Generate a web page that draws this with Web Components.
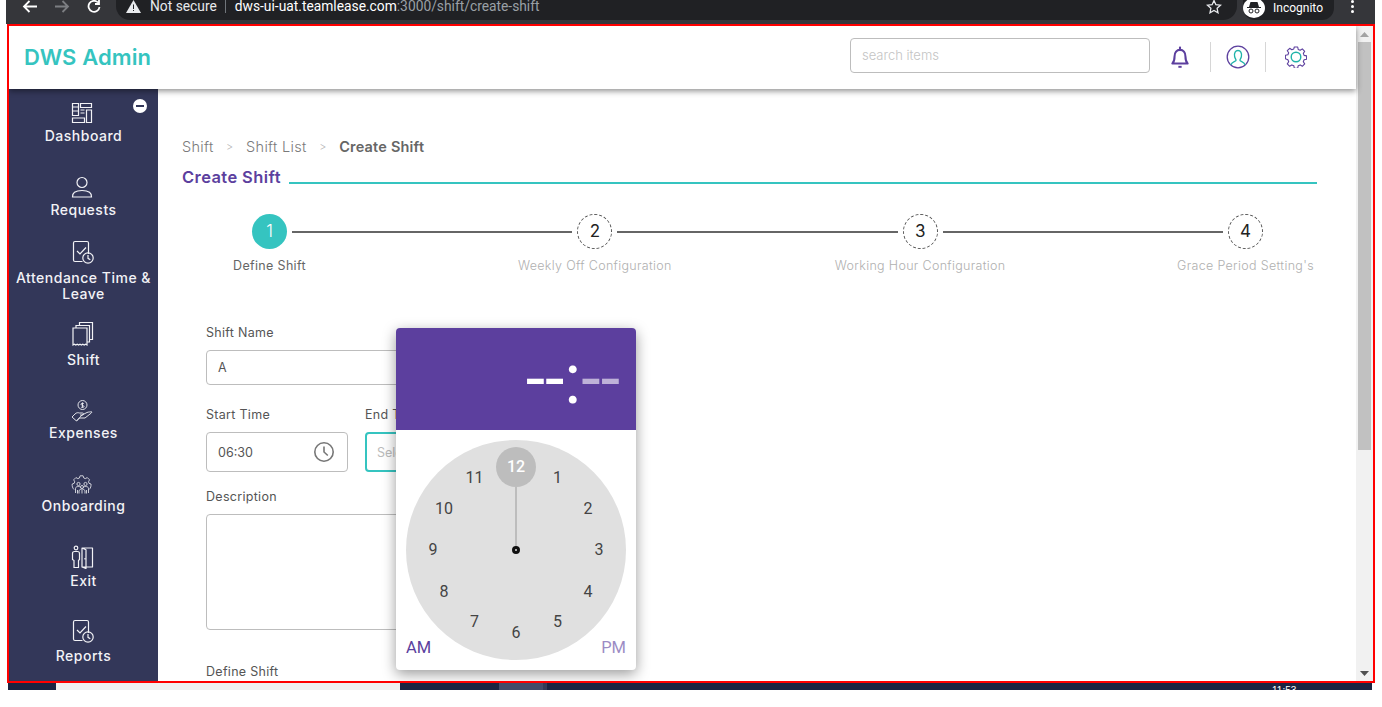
<!DOCTYPE html>
<html>
<head>
<meta charset="utf-8">
<title>Create Shift</title>
<style>
html, body { margin: 0; height: 100%; overflow: hidden; background: #fff; }
body { font-family: Inter, "Liberation Sans", sans-serif; }
</style>
</head>
<body>
<dws-browser-bar></dws-browser-bar>
<dws-frame>
  <dws-header slot="header"></dws-header>
  <dws-nav slot="nav">
    <dws-nav-item label="Dashboard" icon="dashboard" height="55" lift="4"></dws-nav-item>
    <dws-nav-item label="Requests" icon="user" height="74" lift="4"></dws-nav-item>
    <dws-nav-item label="Attendance Time &amp; Leave" icon="check" height="84" lift="6"></dws-nav-item>
    <dws-nav-item label="Shift" icon="pages" height="66" lift="5"></dws-nav-item>
    <dws-nav-item label="Expenses" icon="hand" height="73" lift="3"></dws-nav-item>
    <dws-nav-item label="Onboarding" icon="gear" height="73" lift="3"></dws-nav-item>
    <dws-nav-item label="Exit" icon="exit" height="75" lift="4"></dws-nav-item>
    <dws-nav-item label="Reports" icon="check" height="75" lift="5"></dws-nav-item>
  </dws-nav>
  <dws-breadcrumb></dws-breadcrumb>
  <dws-section-title>Create Shift</dws-section-title>
  <dws-stepper></dws-stepper>
  <dws-form></dws-form>
  <dws-clock slot="popup"></dws-clock>
</dws-frame>
<dws-task-strip></dws-task-strip>

<script>
const html = (strings, ...values) => String.raw({ raw: strings }, ...values)

const purple = '#5c3f9e'
const teal = '#35c4c0'

function define(name, render) {
    customElements.define(name, class extends HTMLElement {
        connectedCallback() {
            if (this.shadowRoot) return
            const shadow = this.attachShadow({ mode: 'open' })
            const template = document.createElement('template')
            template.innerHTML = render(this)
            shadow.append(template.content.cloneNode(true))
        }
    })
}

define('dws-browser-bar', () => html`
    <style>
    :host { display: block; height: 24px; margin: 0 7px 0 6px; background: #35363a; overflow: hidden; }
    .row { display: flex; align-items: flex-start; height: 20px; color: #fff; font: 13.8px/12px Roboto, sans-serif; }
    .nav { display: flex; width: 110px; }
    .nav svg { margin-left: 16px; }
    .pill { display: flex; flex: 1; align-items: center; box-sizing: border-box; height: 21px; margin-top: -1px; padding: 0 15px 7px 10px;
        background: #202124; border-radius: 0 0 14px 14px; }
    .pill svg { flex: none; }
    .secure { margin-left: 9px; color: #e8eaed; }
    .sep { width: 1px; height: 14px; margin: 0 9px 0 8px; background: #70757a; }
    .host { color: #fff; }
    .rest { color: #9aa0a6; }
    .grow { flex: 1; }
    .incognito { display: flex; align-items: center; gap: 8px; box-sizing: border-box; height: 20px; margin: 0 8px 0 6px; padding: 0 11px 5px 0; border-radius: 0 0 12px 12px; background: #202124; font-size: 12px; }
    .badge { width: 22px; height: 20px; margin-top: 1px; border-radius: 50%; background: #fff; display: flex; align-items: center; justify-content: center; }
    .dots { display: flex; flex-direction: column; gap: 2px; margin: 0 21px 0 9px; }
    .dots i { width: 3px; height: 3px; border-radius: 50%; background: #fff; }
    </style>
    <div class="row">
        <div class="nav">
            <svg width="16" height="14" viewBox="0 0 16 14" fill="none" stroke="#fff" stroke-width="1.8"><path d="M15 6.5H2M7.5 1 2 6.5 7.5 12"/></svg>
            <svg width="16" height="14" viewBox="0 0 16 14" fill="none" stroke="#7c7e82" stroke-width="1.8"><path d="M1 6.5h13M8.500 1 14 6.500 8.500 12"/></svg>
            <svg width="16" height="14" viewBox="0 0 16 14" fill="none" stroke="#fff" stroke-width="1.8"><path d="M13.500 7a5.500 5.500 0 1 1-1.500-4.500M13 0v4H9"/></svg>
        </div>
        <div class="pill">
            <svg width="15" height="13" viewBox="0 0 15 13"><path d="M7.500 0 15 13H0z" fill="#e8eaed"/><path d="M7 4.500h1V9H7zM7 10h1v1H7z" fill="#202124"/></svg>
            <span class="secure">Not secure</span><span class="sep"></span>
            <span class="host">dws-ui-uat.teamlease.com</span><span class="rest">:3000/shift/create-shift</span>
            <span class="grow"></span>
            <svg width="16" height="15" viewBox="0 0 16 15" fill="none" stroke="#e8eaed" stroke-width="1.300"><path d="M8 1.500 9.900 5.700l4.600.5-3.400 3.100.9 4.500L8 11.500l-4 2.300.9-4.500L1.500 6.200l4.600-.5z"/></svg>
        </div>
        <div class="incognito">
            <span class="badge"><svg width="16" height="12" viewBox="0 0 16 12"><path d="M3 5 4.500 0h7L13 5h2v1H1V5z" fill="#202124"/><circle cx="5" cy="9" r="2" fill="none" stroke="#202124"/><circle cx="11" cy="9" r="2" fill="none" stroke="#202124"/></svg></span>
            <span>Incognito</span>
        </div>
        <div class="dots"><i></i><i></i><i></i></div>
    </div>
`)

define('dws-frame', () => html`
    <style>
    :host { display: grid; grid-template-columns: 1fr 17px; box-sizing: border-box; width: 1368px; height: 659px; margin-left: 7px;
        border: 2px solid #f00; overflow: hidden; background: #fff; }
    .left { display: flex; flex-direction: column; min-width: 0; min-height: 0; }
    ::slotted(dws-header) { position: relative; z-index: 2; }
    .body { display: flex; flex: 1; min-height: 0; }
    .main { position: relative; flex: 1; min-width: 0; padding: 48px 39px 0 24px; overflow: hidden; }
    .bar { display: flex; flex-direction: column; background: #f1f1f1; }
    .arrow { display: flex; justify-content: center; align-items: center; height: 16px; }
    .thumb { height: 408px; margin: 0 2px; background: #c1c1c1; }
    .track { flex: 1; }
    </style>
    <div class="left">
        <slot name="header"></slot>
        <div class="body">
            <slot name="nav"></slot>
            <div class="main"><slot></slot><slot name="popup"></slot></div>
        </div>
    </div>
    <div class="bar">
        <div class="arrow"><svg width="9" height="5"><path d="M4.500 0 9 5H0z" fill="#a3a3a3"/></svg></div>
        <div class="thumb"></div>
        <div class="track"></div>
        <div class="arrow"><svg width="9" height="5"><path d="M0 0h9L4.500 5z" fill="#505050"/></svg></div>
    </div>
`)

define('dws-header', () => html`
    <style>
    :host { display: flex; align-items: center; box-sizing: border-box; height: 63px; padding: 0 49px 2px 15px; background: #fff;
        box-shadow: 0 2px 6px rgba(0, 0, 0, .45); }
    .logo { flex: 1; color: ${teal}; font: 600 22px Inter, sans-serif; letter-spacing: .1px; }
    .search { box-sizing: border-box; width: 300px; height: 35px; margin-bottom: 2px; padding: 0 11px; border: 1px solid #bdbdbd; border-radius: 4px;
        color: #c4c4c4; font: 300 13px/33px Inter, sans-serif; }
    .icons { display: flex; align-items: center; margin-left: 18px; }
    .sep { width: 1px; height: 30px; background: #d6d6d6; }
    </style>
    <div class="logo">DWS Admin</div>
    <div class="search">search items</div>
    <div class="icons">
        <svg width="24" height="24" viewBox="0 0 22 22" fill="none" stroke="${purple}" stroke-width="1.900"><path d="M4 17c1.500-1.500 2-3 2-6.500C6 7 8 4.500 11 4.500s5 2.500 5 6c0 3.500.5 5 2 6.500z" stroke-linejoin="round"/><path d="M11 1.500v3"/><path d="M9.500 20h3" stroke-width="1.800"/></svg>
        <span class="sep" style="margin-left:18px"></span>
        <svg style="margin-left:15px" width="24" height="24" viewBox="0 0 24 24" fill="none"><circle cx="12" cy="12" r="10.800" stroke="${purple}" stroke-width="1.300"/><path d="M5 20c.5-3 4-3.200 5-4.500.4-.8-1-2-1.400-4C8 8 9.500 5.500 12 5.500s4 2.500 3.400 6c-.4 2-1.800 3.200-1.400 4 1 1.300 4.500 1.500 5 4.500" stroke="#1fb3a9" stroke-width="1.300"/></svg>
        <span class="sep" style="margin-left:15px"></span>
        <svg style="margin-left:19px" width="22" height="22" viewBox="0 0 22 22" fill="none"><path d="M9.300 1h3.400l.5 2.500 2 .8 2.100-1.400 2.400 2.400-1.400 2.100.8 2 2.500.5v3.400l-2.500.5-.8 2 1.400 2.100-2.400 2.400-2.100-1.400-2 .8-.5 2.500H9.300l-.5-2.500-2-.8-2.100 1.400-2.400-2.400 1.400-2.100-.8-2L.4 12.700V9.300l2.500-.5.8-2-1.400-2.100 2.400-2.400 2.100 1.400 2-.8z" stroke="${purple}" stroke-width="1.100" stroke-linejoin="round"/><circle cx="11" cy="11" r="4.800" stroke="#1fb3a9" stroke-width="1.400"/></svg>
    </div>
`)

define('dws-nav', () => html`
    <style>
    :host { display: flex; flex-direction: column; position: relative; flex: none; width: 149px; height: 100%; background: #333759; overflow: hidden; }
    .collapse { position: absolute; top: 10px; left: 124px; width: 14px; height: 14px; border-radius: 50%; background: #fff;
        display: flex; align-items: center; justify-content: center; }
    .collapse i { width: 8px; height: 2px; background: #333759; }
    </style>
    <slot></slot>
    <div class="collapse"><i></i></div>
`)

const stroke = 'fill="none" stroke="#f2f2f6" stroke-width="1.200"'
const navIcons = {
    dashboard: html`<svg width="22" height="22" viewBox="0 0 22 22" ${stroke}><path d="M1.500 1.500h6v12h-6zM1.500 5h6M1.500 9h6M9.500 1.500h11v4h-11zM9.500 8h4M9.500 11h4M15.500 8v12.500h5V8zM1.500 16h12v4.500h-12z"/></svg>`,
    user: html`<svg width="22" height="22" viewBox="0 0 22 22" ${stroke}><circle cx="11" cy="6.500" r="5"/><path d="M1.500 21c0-1 0-3.500 2-4.800 1.500-1 4-1.700 7.500-1.700s6 .7 7.500 1.700c2 1.300 2 3.800 2 4.800z"/></svg>`,
    check: html`<svg width="24" height="24" viewBox="0 0 24 24" ${stroke}><path d="M12.500 21.500H5a1.500 1.500 0 0 1-1.500-1.500V3A1.500 1.500 0 0 1 5 1.500h12A1.500 1.500 0 0 1 18.500 3v11"/><path d="M7 11l3 3 6-6.500"/><circle cx="18" cy="18" r="5.200"/><path d="M18 15v3.300l2.300 1.400"/></svg>`,
    pages: html`<svg width="24" height="26" viewBox="0 0 24 26" ${stroke}><path d="M3 7h14v17l-1.400-.8-1.400.8-1.400-.8-1.400.8-1.400-.8-1.400.8-1.400-.8-1.400.8-1.400-.8L3 24z"/><path d="M6 7V4.500h13.500v16.500H17M9.500 4.500V1.500H22.500v17h-3"/></svg>`,
    hand: html`<svg width="22" height="22" viewBox="0 0 22 22" fill="none" stroke="#f2f2f6" stroke-width=".9"><circle cx="11.500" cy="5" r="4.500"/><path d="M11.500 2.500v5M13 3.800c-.5-.8-3-.8-3 .5s3 .9 3 2.200-2.500 1.200-3 .4"/><path d="M1 17l3-3c1.500-1.500 3-1.500 4.500-1h3c1.500 0 1.500 2-.5 2H9M11 15l5-2.500c2-.8 3-.3 4-.8.800-.3 1 .7.300 1.300l-6.300 5H8.500l-2.500 2.500z"/><path d="M1 17l4.500 4 1-1"/></svg>`,
    gear: html`<svg width="22" height="22" viewBox="0 0 22 22" fill="none" stroke="#f2f2f6" stroke-width=".8"><path d="M3 16.500C1.500 15 1 13 1.200 11l2-.7.5-1.500-1-2 2.200-2.200 2 1 1.500-.6.7-2.200h3l.7 2.200 1.500.6 2-1 2.200 2.200-1 2 .5 1.500 2 .7c.2 2-.3 4-1.800 5.500"/><circle cx="7.500" cy="11" r="1.600"/><circle cx="14.500" cy="11" r="1.600"/><circle cx="11" cy="14" r="1.500"/><path d="M4.500 20v-4.500c0-1.500 1.500-2 3-2s2 .5 2 1M17.500 20v-4.500c0-1.500-1.500-2-3-2s-2 .5-2 1M8 20.500V18c0-1 1.500-2 3-2s3 1 3 2v2.500M6.500 17v3.500M15.500 17v3.500M11 17v3.500"/></svg>`,
    exit: html`<svg width="24" height="24" viewBox="0 0 24 24" ${stroke}><circle cx="6" cy="3" r="1.800"/><path d="M2.500 8.500c0-1.300 1-2 2-2h3c1 0 2 .7 2 2v6l-1 1v7H4v-7l-1.500-1z"/><path d="M12 3h10.500v19H12zM12 3l4 1.800V23.500L12 22z" stroke-linejoin="round"/><path d="M15 13v1.500" /></svg>`
}

define('dws-nav-item', host => html`
    <style>
    :host { display: flex; flex-direction: column; align-items: center; justify-content: flex-end; box-sizing: border-box;
        height: ${host.getAttribute('height')}px; flex: none; }
    svg { display: block; }
    .icon { margin: 0 4px ${+(host.getAttribute('lift') || 2)}px 0; }
    .label { width: 146px; color: #f2f2f6; font: 500 14px/16px Inter, sans-serif; letter-spacing: .5px; text-align: center; }
    </style>
    <div class="icon">${navIcons[host.getAttribute('icon')]}</div>
    <div class="label">${host.getAttribute('label').replace('&', '&amp;')}</div>
`)

define('dws-breadcrumb', () => html`
    <style>
    :host { display: flex; align-items: center; height: 20px; color: #7a7a7a; font: 300 14.500px/20px Inter, sans-serif; letter-spacing: .3px; }
    .gt { margin: 0 12.5px; color: #b5b5b5; font-size: 11px; }
    b { color: #666; font-weight: 600; font-size: 14.500px; letter-spacing: .2px; }
    </style>
    <span>Shift</span><span class="gt">&gt;</span><span>Shift List</span><span class="gt">&gt;</span><b>Create Shift</b>
`)

define('dws-section-title', () => html`
    <style>
    :host { display: flex; align-items: flex-end; gap: 8px; height: 20px; margin-top: 10px; color: ${purple}; font: 600 16.500px/20px Inter, sans-serif; letter-spacing: .4px; }
    i { flex: 1; height: 2px; margin-bottom: 3px; background: ${teal}; }
    </style>
    <slot></slot><i></i>
`)

define('dws-stepper', () => {
    const steps = ['Define Shift', 'Weekly Off Configuration', 'Working Hour Configuration', "Grace Period Setting's"]
    const circles = steps.map((s, i) => html`<div class="dot ${i ? '' : 'on'}">${i + 1}</div>`)
        .join('<i></i>')
    const labels = steps.map((s, i) => html`<div class="cell ${i ? '' : 'on'}"><span>${s}</span></div>`)
        .join('<b></b>')
    return html`
    <style>
    :host { display: grid; grid-template-columns: 35px 1fr 35px 1fr 35px 1fr 35px; row-gap: 9px; align-items: center; margin: 27px 54px 0 70px; }
    .dot { box-sizing: border-box; width: 35px; height: 35px; border: 1px dashed #555; border-radius: 50%; color: #222;
        font: 400 17px/33px Inter, sans-serif; text-align: center; }
    .dot.on { background: ${teal}; border: 0; color: #fff; line-height: 35px; font-weight: 300; }
    i { height: 2px; margin: 0 5px; background: #666; }
    .cell { display: flex; justify-content: center; height: 16px; color: #b0b0b0; font: 300 12.500px/16px Inter, sans-serif; letter-spacing: .33px; white-space: nowrap; }
    .cell.on { color: #666; font-weight: 400; }
    </style>
    ${circles}${labels}`
})

define('dws-field', host => html`
    <style>
    :host { display: block; box-sizing: border-box; width: ${host.getAttribute('width') || 300}px; margin-top: ${host.getAttribute('top') || 0}px; }
    label { display: block; height: 16px; margin-bottom: 9px; color: #555; font: 400 12.500px/16px Inter, sans-serif; letter-spacing: .3px; white-space: nowrap; }
    .box { display: flex; align-items: center; box-sizing: border-box; height: ${host.getAttribute('height') || 40}px; padding: 0 12px 0 11px;
        border: 1px solid #bdbdbd; border-radius: 4px; background: #fff; color: #555; font: 400 12.500px Inter, sans-serif; }
    :host([active]) .box { border: 2px solid ${teal}; padding: 0 10px; color: #bbb; }
    .box span { flex: 1; }
    </style>
    <label>${host.getAttribute('label')}</label>
    <div class="box"><span>${host.getAttribute('value') || ''}</span><slot></slot></div>
`)

define('dws-form', () => html`
    <style>
    :host { display: block; margin: 51px 0 0 24px; }
    .row { display: flex; gap: 17px; margin-top: 22px; }
    </style>
    <dws-field label="Shift Name" value="A" height="35" width="300"></dws-field>
    <div class="row">
        <dws-field label="Start Time" value="06:30" width="142">
            <svg width="22" height="22" viewBox="0 0 22 22" fill="none" stroke="#777" stroke-width="1.600"><circle cx="11" cy="11" r="9.200"/><path d="M11 5.500V11l3.800 3.500"/></svg>
        </dws-field>
        <dws-field label="End Time" value="Select" width="142" active></dws-field>
    </div>
    <dws-field label="Description" height="116" width="300" top="17"></dws-field>
    <dws-field label="Define Shift" height="40" width="300" top="34"></dws-field>
`)

define('dws-clock', () => {
    const nums = []
    for (let n = 1; n <= 12; n++) {
        const a = n * Math.PI / 6
        const x = 110 + 83 * Math.sin(a)
        const y = 109 - 83 * Math.cos(a)
        nums.push(html`<span class="num ${n === 12 ? 'sel' : ''}" style="left:${x.toFixed(1)}px;top:${y.toFixed(1)}px">${n}</span>`)
    }
    return html`
    <style>
    :host { position: absolute; left: 238px; top: 239px; width: 240px; height: 342px; border-radius: 4px; background: #fff;
        box-shadow: 0 4px 14px rgba(0, 0, 0, .4); overflow: hidden; }
    .head { display: flex; justify-content: flex-end; box-sizing: border-box; height: 102px; padding: 0 16px 0 0; background: ${purple};
        color: #fff; font: 400 70px/102px Roboto, sans-serif; white-space: pre; }
    .head span { opacity: .6; }
    .face { position: relative; width: 220px; height: 220px; margin: 10px auto 0; border-radius: 50%; background: #e0e0e0; }
    .sel-bg { position: absolute; left: 90px; top: 7px; width: 40px; height: 40px; border-radius: 50%; background: #bdbdbd; }
    .hand { position: absolute; left: 109px; top: 47px; width: 2px; height: 63px; background: #bdbdbd; }
    .pin { position: absolute; left: 106px; top: 106px; box-sizing: border-box; width: 8px; height: 8px; border: 3px solid #111; border-radius: 50%; background: #ddd; }
    .num { position: absolute; transform: translate(-50%, -50%); color: #444; font: 400 16px Roboto, sans-serif; }
    .num.sel { color: #fff; font-weight: 500; }
    .ampm { position: absolute; bottom: 13px; font: 400 16.500px Roboto, sans-serif; color: ${purple}; }
    </style>
    <div class="head">--:<span>--</span></div>
    <div class="face">
        <div class="sel-bg"></div><div class="hand"></div><div class="pin"></div>
        ${nums.join('')}
    </div>
    <div class="ampm" style="left:10px">AM</div>
    <div class="ampm" style="right:10px;opacity:.6">PM</div>`
})

define('dws-task-strip', () => html`
    <style>
    :host { display: flex; height: 7px; margin-left: 8px; width: 1364px; overflow: hidden; background: #1b2442; }
    .light { width: 344px; margin-left: 48px; background: #f0f0f0; flex: none; }
    .a { width: 99px; flex: none; }
    .tab { width: 44px; background: #434b68; flex: none; }
    .edge { width: 4px; background: #343b58; flex: none; }
    .clock { margin-left: 725px; padding-top: 3px; color: #fff; font: 10px/10px "Liberation Sans", sans-serif; }
    </style>
    <div class="light"></div><div class="a"></div><div class="tab"></div><div class="edge"></div><div class="clock">11:53</div>
`)
</script>
</body>
</html>
